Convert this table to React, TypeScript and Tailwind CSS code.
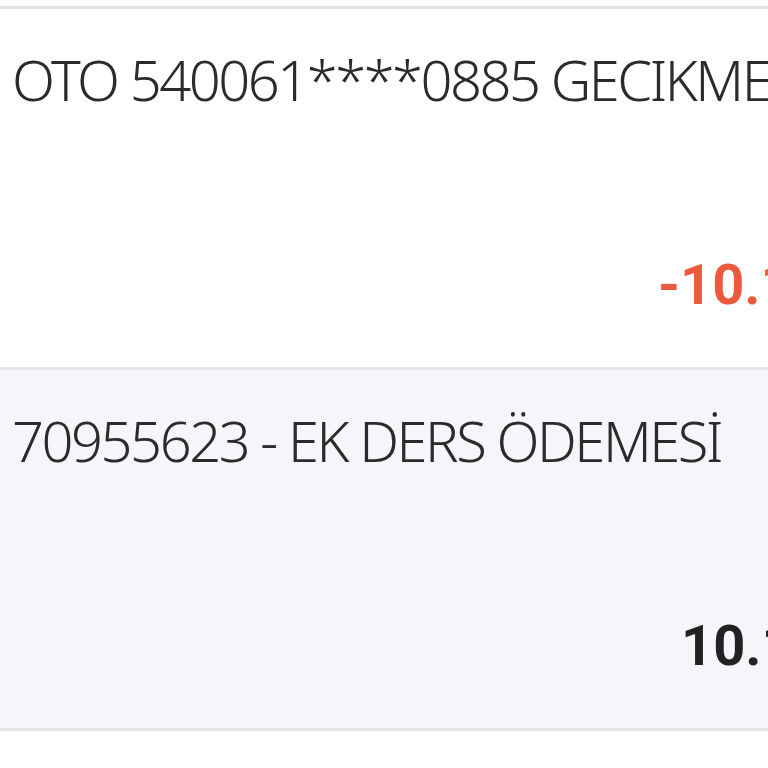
export default function App() {
  return (
    <div className="w-[768px] h-[768px] overflow-hidden bg-white pt-[6px]">
      <div className="border-t-[3px] border-[#e2e4ea]" />
      <div className="h-[358px] bg-white flex flex-col pl-[12px] whitespace-nowrap">
        <p className="mt-[34px] text-[56px] leading-[72px] font-light tracking-[-2.45px] text-[#2b2b2b] font-['Noto_Sans',sans-serif]">
          OTO 540061****0885 GECIKMELI ODEME
        </p>
        <p className="mt-auto mb-[46px] ml-[646px] text-[56px] leading-[72px] font-bold text-[#eb5a3c] font-['Roboto',sans-serif]">
          -10.150,00 TL
        </p>
      </div>
      <div className="border-t-[3px] border-[#e4e6ec]" />
      <div className="h-[358px] bg-[#f5f6fa] flex flex-col pl-[12px] whitespace-nowrap">
        <p className="mt-[34px] text-[56px] leading-[72px] font-light tracking-[-2.45px] text-[#2b2b2b] font-['Noto_Sans',sans-serif]">
          70955623 - EK DERS ÖDEMESİ
        </p>
        <p className="mt-auto mb-[46px] ml-[669px] text-[56px] leading-[72px] font-bold text-[#222222] font-['Roboto',sans-serif]">
          10.150,00 TL
        </p>
      </div>
      <div className="border-t-[3px] border-[#e2e4ea]" />
    </div>
  );
}
